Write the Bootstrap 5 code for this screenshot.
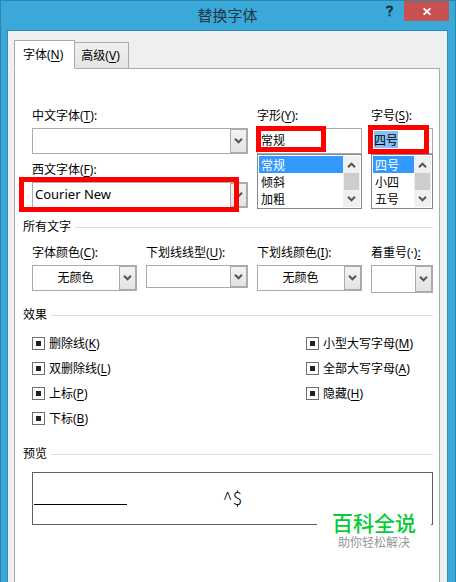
<!DOCTYPE html>
<html lang="zh-CN">
<head>
<meta charset="utf-8">
<meta name="viewport" content="width=device-width, initial-scale=1">
<title>替换字体</title>
<link href="https://cdn.jsdelivr.net/npm/bootstrap@5.3.0/dist/css/bootstrap.min.css" rel="stylesheet">
<style>
  body { font: 12px/16px "Noto Sans", "Noto Sans CJK SC", sans-serif; color: #000; background: #3aa8d8; }
  u { text-underline-offset: 2px; }
  .dialog { border: 1px solid #2b86ab; border-bottom: 0; padding: 0 7px 0 6px; background: #3aa8d8; }
  .titlebar { height: 29px; }
  .titlebar h1 { font-size: 15px; line-height: 28px; color: #203845; font-weight: 400; }
  .title-tools { position: absolute; right: -1px; top: 0; }
  .help-btn { width: 28px; height: 20px; background: none; color: #1e2a30; }
  .close-btn { width: 45px; height: 20px; background: #c75050; }
  .dialog-body { background: #efefef; border: 1px solid #2b8fba; border-bottom: 0; padding: 9px 7px 0 6px; }
  .dialog-tabs { border: 0; }
  .dialog-tabs .nav-link { border: 1px solid #ababab; border-radius: 0; color: #000; margin: 0; line-height: 16px; }
  .dialog-tabs .nav-link.active { background: #fff; border-color: #ababab #ababab #fff; padding: 6px 11px 5px 8px; position: relative; z-index: 1; margin-bottom: -1px; }
  .dialog-tabs .nav-link.second { background: linear-gradient(#f0f0f0, #e4e4e4); padding: 5px 8px 4px 6px; border-left: 0; border-bottom: 0; }
  .pane { background: #fff; border: 1px solid #ababab; border-bottom: 0; padding: 35px 6px 0 8px; }
  .inset { padding-left: 9px; }
  .fields { display: grid; grid-template-columns: 105fr 102fr 105fr 62fr; column-gap: 9px; align-items: start; }
  .wide { grid-column: span 2; }
  .field-label { display: block; line-height: 16px; padding: 4px 0; white-space: nowrap; }
  .combo, .entry { position: relative; height: 26px; }
  .combo.short { height: 23px; }
  .combo.tall { height: 28px; }
  .combo select, .entry input { width: 100%; height: 100%; border: 1px solid #ababab; border-radius: 0; background: #fff; color: #000; appearance: none; padding: 0 20px 2px 2px; outline: 0; display: block; }
  .combo .latin { font-size: 13px; }
  .entry input { padding: 0 3px 3px; }
  .combo.centered select { padding: 0 18px 0 0; text-align: center; text-align-last: center; }
  .drop { position: absolute; right: 0; top: 0; bottom: 0; width: 18px; border: 2px solid #ababab; border-left-width: 1px; background: linear-gradient(#f3f3f3, #e3e3e3); pointer-events: none; }
  .ring { position: absolute; border: 5px solid #f00; pointer-events: none; z-index: 2; }
  .ring-west { left: -13px; right: 9px; top: -5px; bottom: -4px; }
  .ring-style { left: -1px; right: 36px; top: -2px; bottom: 2px; }
  .ring-size { left: -3px; right: 4px; top: -3px; bottom: 0; }
  .entry .size-text { padding-left: 2px; background: linear-gradient(#89bff5, #89bff5) 2px 2px / 24px 17px no-repeat #fff; }
  .listbox { border: 1px solid #828790; padding: 1px; height: 55px; background: #fff; }
  .listbox select { border: 0; padding: 0; width: 1px; height: 51px; overflow: hidden; appearance: none; background: #fff; outline: 0; color: #000; scrollbar-width: none; border-radius: 0; }
  .listbox option { height: 17px; min-height: 17px; line-height: 15px; padding: 0 2px 2px; }
  .listbox option:checked { background: linear-gradient(#3399ff, #3399ff); color: #fff; -webkit-text-fill-color: #fff; }
  .scroller { width: 17px; background: #f0f0f0; }
  .scroller span { height: 17px; }
  .thumb { background: #cdcdcd; margin: 0 1px; }
  .group-title { font-size: 12px; line-height: 20px; font-weight: 400; margin: 0; }
  .rule { height: 1px; background: #dcdcdc; }
  .check-row { height: 25px; }
  .tick { appearance: none; width: 13px; height: 13px; margin: 0; border: 1px solid #707070; background: linear-gradient(#222, #222) center / 5px 5px no-repeat #fff; }
  .checks { padding-top: 6px; padding-bottom: 13px; }
  .checks-right { width: 127px; }
  .preview { position: relative; height: 53px; border: 1px solid #606060; margin-top: 8px; margin-bottom: 57px; }
  .blank-line { width: 93px; height: 1px; background: #000; margin: 31px 0 0 1px; }
  .sample { position: absolute; left: 0; right: 0; top: 12px; text-align: center; font: 300 18px/24px "Noto Sans CJK SC", sans-serif; }
  .brand { position: absolute; right: 1px; top: 37px; width: 114px; background: #fff; text-align: center; z-index: 2; }
  .brand-name { font: 500 21px/24px "Liberation Sans", "Noto Sans CJK SC", sans-serif; color: #07cc35; padding-top: 2px; }
  .brand-sub { font: 12px/14px "Liberation Sans", "Noto Sans CJK SC", sans-serif; color: #969696; padding-bottom: 4px; }
</style>
<script src="https://cdn.jsdelivr.net/npm/bootstrap@5.3.0/dist/js/bootstrap.bundle.min.js"></script>
</head>
<body>
<main class="dialog min-vh-100 d-flex flex-column">
  <header class="titlebar position-relative">
    <h1 class="m-0 text-center">替换字体</h1>
    <div class="title-tools d-flex">
      <button type="button" class="help-btn border-0 p-0 d-flex align-items-center justify-content-center" aria-label="帮助">
        <svg width="8" height="12" viewBox="0 0 8 12" fill="none" stroke="currentColor" stroke-width="2"><path d="M1 3.5V2.6Q1.3 1.5 3.5 1.5Q6 1.5 6 3.3Q6 4.6 4.4 5.4Q3.5 6 3.5 8M3.5 9.2V11.2"/></svg>
      </button>
      <button type="button" class="close-btn border-0 p-0 d-flex align-items-center justify-content-center" aria-label="关闭">
        <svg width="8" height="7" viewBox="0 0 8 7" stroke="#fff" stroke-width="1.8"><path d="M.6.3L7.4 6.7M7.4.3L.6 6.7"/></svg>
      </button>
    </div>
  </header>
  <div class="dialog-body flex-grow-1 d-flex flex-column">
    <ul class="nav nav-tabs dialog-tabs align-items-end" role="tablist">
      <li class="nav-item" role="presentation"><button type="button" class="nav-link active" role="tab" aria-selected="true">字体(<u>N</u>)</button></li>
      <li class="nav-item" role="presentation"><button type="button" class="nav-link second" role="tab" aria-selected="false">高级(<u>V</u>)</button></li>
    </ul>
    <form class="pane flex-grow-1">
      <div class="inset fields">
        <div class="wide">
          <label class="field-label" for="cn-font">中文字体(<u>T</u>):</label>
          <div class="combo"><select id="cn-font"><option></option></select><span class="drop d-flex align-items-center justify-content-center"><svg width="9" height="6" viewBox="0 0 9 6" fill="none" stroke="#555" stroke-width="2"><path d="M1 .8L4.5 4.3L8 .8"/></svg></span></div>
          <label class="field-label mt-1" for="west-font">西文字体(<u>F</u>):</label>
          <div class="combo"><select id="west-font" class="latin"><option>Courier New</option></select><span class="drop d-flex align-items-center justify-content-center"><svg width="9" height="6" viewBox="0 0 9 6" fill="none" stroke="#555" stroke-width="2"><path d="M1 .8L4.5 4.3L8 .8"/></svg></span><span class="ring ring-west"></span></div>
        </div>
        <div>
          <label class="field-label" for="style-text">字形(<u>Y</u>):</label>
          <div class="entry"><input id="style-text" type="text" value="常规"><span class="ring ring-style"></span></div>
          <div class="listbox d-flex">
            <select class="flex-grow-1" size="3" aria-label="字形列表"><option selected>常规</option><option>倾斜</option><option>加粗</option></select>
            <div class="scroller d-flex flex-column" aria-hidden="true">
              <span class="d-flex align-items-center justify-content-center"><svg width="9" height="6" viewBox="0 0 9 6" fill="none" stroke="#555" stroke-width="2"><path d="M1 5.2L4.5 1.7L8 5.2"/></svg></span>
              <span class="thumb"></span>
              <span class="d-flex align-items-center justify-content-center"><svg width="9" height="6" viewBox="0 0 9 6" fill="none" stroke="#555" stroke-width="2"><path d="M1 .8L4.5 4.3L8 .8"/></svg></span>
            </div>
          </div>
        </div>
        <div>
          <label class="field-label" for="size-text">字号(<u>S</u>):</label>
          <div class="entry"><input id="size-text" class="size-text" type="text" value="四号"><span class="ring ring-size"></span></div>
          <div class="listbox d-flex">
            <select class="flex-grow-1" size="3" aria-label="字号列表"><option selected>四号</option><option>小四</option><option>五号</option></select>
            <div class="scroller d-flex flex-column" aria-hidden="true">
              <span class="d-flex align-items-center justify-content-center"><svg width="9" height="6" viewBox="0 0 9 6" fill="none" stroke="#555" stroke-width="2"><path d="M1 5.2L4.5 1.7L8 5.2"/></svg></span>
              <span class="thumb"></span>
              <span class="d-flex align-items-center justify-content-center"><svg width="9" height="6" viewBox="0 0 9 6" fill="none" stroke="#555" stroke-width="2"><path d="M1 .8L4.5 4.3L8 .8"/></svg></span>
            </div>
          </div>
        </div>
      </div>

      <div class="d-flex align-items-center gap-1 mt-2"><h2 class="group-title">所有文字</h2><span class="rule flex-grow-1"></span></div>
      <div class="inset fields pt-1">
        <div>
          <label class="field-label" for="font-color">字体颜色(<u>C</u>):</label>
          <div class="combo centered"><select id="font-color"><option>无颜色</option></select><span class="drop d-flex align-items-center justify-content-center"><svg width="9" height="6" viewBox="0 0 9 6" fill="none" stroke="#555" stroke-width="2"><path d="M1 .8L4.5 4.3L8 .8"/></svg></span></div>
        </div>
        <div>
          <label class="field-label" for="line-style">下划线线型(<u>U</u>):</label>
          <div class="combo short"><select id="line-style"><option></option></select><span class="drop d-flex align-items-center justify-content-center"><svg width="9" height="6" viewBox="0 0 9 6" fill="none" stroke="#555" stroke-width="2"><path d="M1 .8L4.5 4.3L8 .8"/></svg></span></div>
        </div>
        <div>
          <label class="field-label" for="line-color">下划线颜色(<u>I</u>):</label>
          <div class="combo centered"><select id="line-color"><option>无颜色</option></select><span class="drop d-flex align-items-center justify-content-center"><svg width="9" height="6" viewBox="0 0 9 6" fill="none" stroke="#555" stroke-width="2"><path d="M1 .8L4.5 4.3L8 .8"/></svg></span></div>
        </div>
        <div>
          <label class="field-label" for="emphasis">着重号(·)<u>:</u></label>
          <div class="combo tall"><select id="emphasis"><option></option></select><span class="drop d-flex align-items-center justify-content-center"><svg width="9" height="6" viewBox="0 0 9 6" fill="none" stroke="#555" stroke-width="2"><path d="M1 .8L4.5 4.3L8 .8"/></svg></span></div>
        </div>
      </div>

      <div class="d-flex align-items-center gap-1 mt-2 pt-1"><h2 class="group-title">效果</h2><span class="rule flex-grow-1"></span></div>
      <div class="inset checks d-flex justify-content-between">
        <div>
          <div class="check-row d-flex align-items-center gap-1"><input class="tick" type="checkbox" id="strike"><label for="strike">删除线(<u>K</u>)</label></div>
          <div class="check-row d-flex align-items-center gap-1"><input class="tick" type="checkbox" id="dstrike"><label for="dstrike">双删除线(<u>L</u>)</label></div>
          <div class="check-row d-flex align-items-center gap-1"><input class="tick" type="checkbox" id="sup"><label for="sup">上标(<u>P</u>)</label></div>
          <div class="check-row d-flex align-items-center gap-1"><input class="tick" type="checkbox" id="sub"><label for="sub">下标(<u>B</u>)</label></div>
        </div>
        <div class="checks-right">
          <div class="check-row d-flex align-items-center gap-1"><input class="tick" type="checkbox" id="scaps"><label for="scaps">小型大写字母(<u>M</u>)</label></div>
          <div class="check-row d-flex align-items-center gap-1"><input class="tick" type="checkbox" id="acaps"><label for="acaps">全部大写字母(<u>A</u>)</label></div>
          <div class="check-row d-flex align-items-center gap-1"><input class="tick" type="checkbox" id="hidden-text"><label for="hidden-text">隐藏(<u>H</u>)</label></div>
        </div>
      </div>

      <div class="d-flex align-items-center gap-1"><h2 class="group-title">预览</h2><span class="rule flex-grow-1"></span></div>
      <div class="inset">
        <div class="preview d-flex align-items-start">
          <div class="blank-line"></div>
          <div class="sample">^$</div>
          <div class="brand"><div class="brand-name">百科全说</div><div class="brand-sub">助你轻松解决</div></div>
        </div>
      </div>
    </form>
  </div>
</main>
</body>
</html>
